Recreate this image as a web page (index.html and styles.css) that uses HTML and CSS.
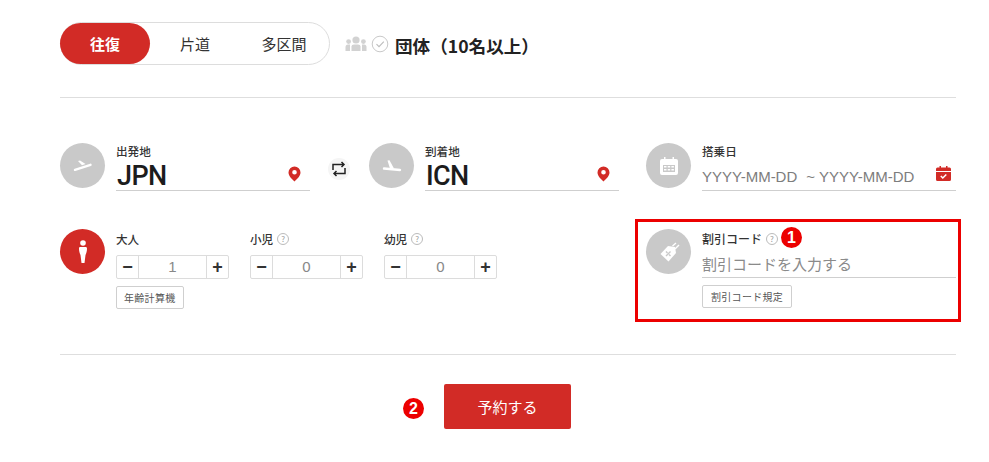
FILE: index.html
```html
<!DOCTYPE html>
<html lang="ja">
<head>
<meta charset="utf-8">
<title>予約</title>
<link rel="stylesheet" href="styles.css">
</head>
<body>
<main class="page">
  <section class="top">
    <div class="trip">
      <span class="trip-item active">往復</span>
      <span class="trip-item oneway">片道</span>
      <span class="trip-item multi">多区間</span>
    </div>
    <svg class="group-icon" width="22" height="16" viewBox="0 0 22 16"><g fill="#d2d2d2"><circle cx="11" cy="4" r="3.6"/><circle cx="3.6" cy="5.6" r="2.4"/><circle cx="18.4" cy="5.6" r="2.4"/><path d="M6.500 15v-4.500Q6.500 8.400 9 8.400h4q2.500 0 2.500 2.100V15z"/><path d="M0.500 15v-4q0-2.500 2.500-2.500h2V15z"/><path d="M21.500 15v-4q0-2.500-2.500-2.500h-2V15z"/></g></svg>
    <svg class="check-icon" width="18" height="18" viewBox="0 0 18 18"><circle cx="9" cy="9" r="7.800" fill="none" stroke="#c9c9c9" stroke-width="1"/><path d="M5.500 9.200l2.500 2.500 4.800-5" fill="none" stroke="#bdbdbd" stroke-width="1.100"/></svg>
    <span class="group-label">団体（10名以上）</span>
  </section>

  <section class="routes">
    <div class="field field-from">
      <span class="disc">
        <svg width="20" height="12" viewBox="0 0 20 12"><path fill="none" stroke="#fff" stroke-width="2.400" stroke-linecap="round" d="M2 9.800L17.500 4.800"/><path fill="#fff" d="M5 1l2-.5 5.500 3.500 -3.500 1.200z"/></svg>
      </span>
      <div class="field-body">
        <div class="label">出発地</div>
        <div class="value-line"><span class="code">JPN</span>
          <svg class="pin" width="13" height="16" viewBox="0 0 13 16"><path fill="#d22b26" fill-rule="evenodd" d="M6.500.500a6 6 0 0 1 6 6c0 3.500-3.500 6.500-6 9-2.500-2.500-6-5.500-6-9a6 6 0 0 1 6-6zm0 3.500a2.300 2.300 0 1 0 0 4.600 2.300 2.300 0 0 0 0-4.600z"/></svg>
        </div>
      </div>
    </div>
    <span class="swap">
      <svg width="16" height="16" viewBox="0 0 16 16"><path fill="none" stroke="#222" stroke-width="1.500" d="M2 9V3.500h10.500M10.500 1l2.500 2.500-2.500 2.500M14 7v5.500H3.500M5.500 10L3 12.500 5.500 15"/></svg>
    </span>
    <div class="field field-to">
      <span class="disc">
        <svg width="20" height="12" viewBox="0 0 20 12"><path fill="none" stroke="#fff" stroke-width="2.400" stroke-linecap="round" d="M2 8.500L18 10"/><path fill="#fff" d="M5.500 0.500l2-.3 4.500 8.300-4 .2z"/></svg>
      </span>
      <div class="field-body">
        <div class="label">到着地</div>
        <div class="value-line"><span class="code">ICN</span>
          <svg class="pin" width="13" height="16" viewBox="0 0 13 16"><path fill="#d22b26" fill-rule="evenodd" d="M6.500.500a6 6 0 0 1 6 6c0 3.500-3.500 6.500-6 9-2.500-2.500-6-5.500-6-9a6 6 0 0 1 6-6zm0 3.500a2.300 2.300 0 1 0 0 4.600 2.300 2.300 0 0 0 0-4.600z"/></svg>
        </div>
      </div>
    </div>
    <div class="field field-date">
      <span class="disc">
        <svg width="18" height="19" viewBox="0 0 18 19"><path fill="#fff" fill-rule="evenodd" d="M2 3h2V1h1.500v2h7V1H14v2h2a2 2 0 0 1 2 2v12a2 2 0 0 1-2 2H2a2 2 0 0 1-2-2V5a2 2 0 0 1 2-2zm1 6v7h12V9z"/><path fill="#fff" d="M4 10h2.500v1.500H4zM7.700 10h2.500v1.500H7.700zM11.400 10h2.500v1.500h-2.500zM4 13h2.500v1.500H4zM7.700 13h2.500v1.500H7.700zM11.400 13h2.500v1.500h-2.500z"/></svg>
      </span>
      <div class="field-body">
        <div class="label">搭乗日</div>
        <div class="value-line date-line"><span class="date">YYYY-MM-DD<span class="tilde">~</span>YYYY-MM-DD</span>
          <svg class="cal" width="15" height="15" viewBox="0 0 15 15"><path fill="#d22b26" fill-rule="evenodd" d="M1.500 1.500h2V0h1.500v1.500h5V0h1.500v1.500h2A1.500 1.500 0 0 1 15 3v2H0V3a1.500 1.500 0 0 1 1.500-1.500zM0 6h15v7.500a1.500 1.500 0 0 1-1.500 1.500h-12A1.500 1.500 0 0 1 0 13.500z"/><path fill="none" stroke="#fff" stroke-width="1.500" d="M4.800 10l2 2 3.500-3.500"/></svg>
        </div>
      </div>
    </div>
  </section>

  <section class="people">
    <span class="disc disc-red">
      <svg width="10" height="23" viewBox="0 0 10 23"><circle cx="5" cy="3" r="2.800" fill="#fff"/><path fill="#fff" d="M2 7h6q1 0 1 1.500c0 3-.8 5-1.500 6.500L6.500 23h-3L2.500 15C1.800 13.500 1 11.500 1 8.500 1 7.500 1.500 7 2 7z"/></svg>
    </span>
    <div class="pax-col pax-adult">
      <div class="label">大人</div>
      <div class="stepper"><span class="step">−</span><span class="count">1</span><span class="step">+</span></div>
      <span class="mini-btn">年齢計算機</span>
    </div>
    <div class="pax-col">
      <div class="label">小児 <span class="help">?</span></div>
      <div class="stepper"><span class="step">−</span><span class="count">0</span><span class="step">+</span></div>
    </div>
    <div class="pax-col">
      <div class="label">幼児 <span class="help">?</span></div>
      <div class="stepper"><span class="step">−</span><span class="count">0</span><span class="step">+</span></div>
    </div>
    <div class="promo">
      <span class="callout">
        <span class="num-badge badge-one">1</span>
      </span>
      <span class="disc">
        <svg width="24" height="22" viewBox="0 0 24 22"><path fill="#fff" d="M11 5l7 1 1 6-7.500 8.500L3.500 13z"/><path fill="none" stroke="#fff" stroke-width="1.400" d="M18 8l4-4M15.500 5L19 2"/><path fill="none" stroke="#c9c9c9" stroke-width="1.400" d="M9 15l4.500-4.500M9 10.500l1.500 1.500M12 13.500l1.500 1.500"/></svg>
      </span>
      <div class="field-body">
        <div class="label">割引コード <span class="help">?</span></div>
        <div class="promo-input">割引コードを入力する</div>
        <span class="mini-btn promo-btn">割引コード規定</span>
      </div>
    </div>
  </section>

  <section class="submit">
    <span class="num-badge badge-two">2</span>
    <button class="reserve" type="button">予約する</button>
  </section>
</main>
</body>
</html>
```

FILE: styles.css
```css
* { box-sizing: border-box; }
html, body { margin: 0; padding: 0; background: #fff; }
body {
  font-family: "Noto Sans CJK JP", "Noto Sans", "Liberation Sans", sans-serif;
  color: #222;
  width: 989px;
  height: 462px;
  overflow: hidden;
}
.page { width: 896px; margin-left: 60px; padding-top: 22px; }

.top {
  display: flex;
  align-items: center;
  height: 76px;
  padding-bottom: 33px;
  border-bottom: 1px solid #dedede;
}
.trip {
  display: flex;
  width: 270px;
  height: 43px;
  border: 1px solid #dddddd;
  border-radius: 22px;
  font-size: 15px;
  line-height: 41px;
  color: #333;
}
.trip-item { text-align: center; }
.trip-item.active {
  width: 90px;
  margin-left: -1px;
  background: #d22b26;
  color: #fff;
  font-weight: 700;
  border-radius: 21px;
}
.oneway { width: 90px; }
.multi { width: 64px; margin-left: 12px; }
.group-icon { margin: 1px 0 0 15px; }
.check-icon { margin: 2px 0 0 4px; }
.group-label { margin: 6px 0 0 6px; font-size: 17.6px; font-weight: 700; color: #222; line-height: 20px; }

.routes { display: flex; align-items: flex-start; padding-top: 45px; height: 131px; }
.field { display: flex; }
.field-from { width: 250px; }
.field-to { width: 250px; }
.field-date { width: 310px; margin-left: 27px; }
.disc {
  flex: none;
  display: flex;
  align-items: center;
  justify-content: center;
  width: 45px;
  height: 45px;
  border-radius: 50%;
  background: #c9c9c9;
}
.disc-red { background: #d22b26; }
.field-body { flex: 1; margin-left: 11px; min-width: 0; }
.label { font-size: 11.6px; line-height: 16px; font-weight: 500; color: #333; display: flex; align-items: center; gap: 4px; }
.value-line {
  display: flex;
  align-items: center;
  justify-content: space-between;
  height: 32px;
  padding-right: 9px;
  border-bottom: 1px solid #cfcfcf;
}
.code { font-family: Roboto, sans-serif; font-size: 27px; line-height: 30px; font-weight: 500; letter-spacing: -0.6px; color: #1c1c1c; margin: 3px 0 0 1px; }
.pin { margin-top: -1px; }
.date-line { padding-right: 5px; padding-top: 3px; }
.date { font-family: "Liberation Sans", sans-serif; font-size: 15px; color: #7d7d7d; white-space: nowrap; }
.tilde { margin: 0 4px 0 9px; }
.cal { margin-top: -6px; }
.swap {
  flex: none;
  width: 22px;
  height: 22px;
  margin: 15px 19px 0 18px;
  border-radius: 50%;
  background: #f5f5f5;
  display: flex;
  align-items: center;
  justify-content: center;
}

.people { display: flex; align-items: flex-start; height: 126px; border-bottom: 1px solid #dedede; }
.people > .disc { margin-right: 11px; }
.pax-col { width: 113px; margin-right: 21px; padding-top: 2px; }
.help {
  display: inline-block;
  width: 12px;
  height: 12px;
  border: 1px solid #bbb;
  border-radius: 50%;
  font-size: 8px;
  line-height: 10px;
  text-align: center;
  color: #999;
  font-weight: 400;
}
.stepper {
  display: flex;
  width: 113px;
  height: 24px;
  margin-top: 8px;
  border: 1px solid #dcdcdc;
  border-radius: 2px;
  line-height: 22px;
}
.step { width: 21px; text-align: center; font-family: "Liberation Sans", sans-serif; font-size: 18px; font-weight: 700; color: #333; }
.count {
  flex: 1;
  text-align: center;
  font-family: "Liberation Sans", sans-serif;
  font-size: 15px;
  color: #888;
  border-left: 1px solid #dcdcdc;
  border-right: 1px solid #dcdcdc;
}
.mini-btn {
  display: inline-block;
  margin-top: 7px;
  height: 23px;
  padding: 0 7px;
  border: 1px solid #cfcfcf;
  border-radius: 2px;
  font-size: 10px;
  line-height: 21px;
  color: #555;
  letter-spacing: 0.3px;
}
.promo-btn { padding: 0 8px; }
.promo { position: relative; display: flex; width: 310px; margin-left: auto; }
.promo .label { margin-top: 2px; font-size: 12px; }
.promo-input {
  height: 31px;
  font-size: 15px;
  line-height: 33px;
  color: #8a8a8a;
  border-bottom: 1px solid #cfcfcf;
}
.callout {
  position: absolute;
  left: -11px;
  top: -10px;
  width: 326px;
  height: 103px;
  border: 3px solid #ec0000;
}
.num-badge {
  display: flex;
  align-items: center;
  justify-content: center;
  width: 21px;
  height: 21px;
  border-radius: 50%;
  background: #ec0000;
  color: #fff;
  font-family: "Liberation Sans", sans-serif;
  font-weight: 700;
  font-size: 16px;
}
.badge-one { position: absolute; left: 143px; top: 5px; }

.submit { position: relative; display: flex; justify-content: center; padding-top: 29px; }
.reserve {
  width: 127px;
  height: 45px;
  margin-right: 1px;
  border: 0;
  border-radius: 2px;
  background: #d22b26;
  color: #fff;
  font: 400 15px "Noto Sans CJK JP", sans-serif;
}
.badge-two { position: absolute; left: 343px; top: 43px; }
```
